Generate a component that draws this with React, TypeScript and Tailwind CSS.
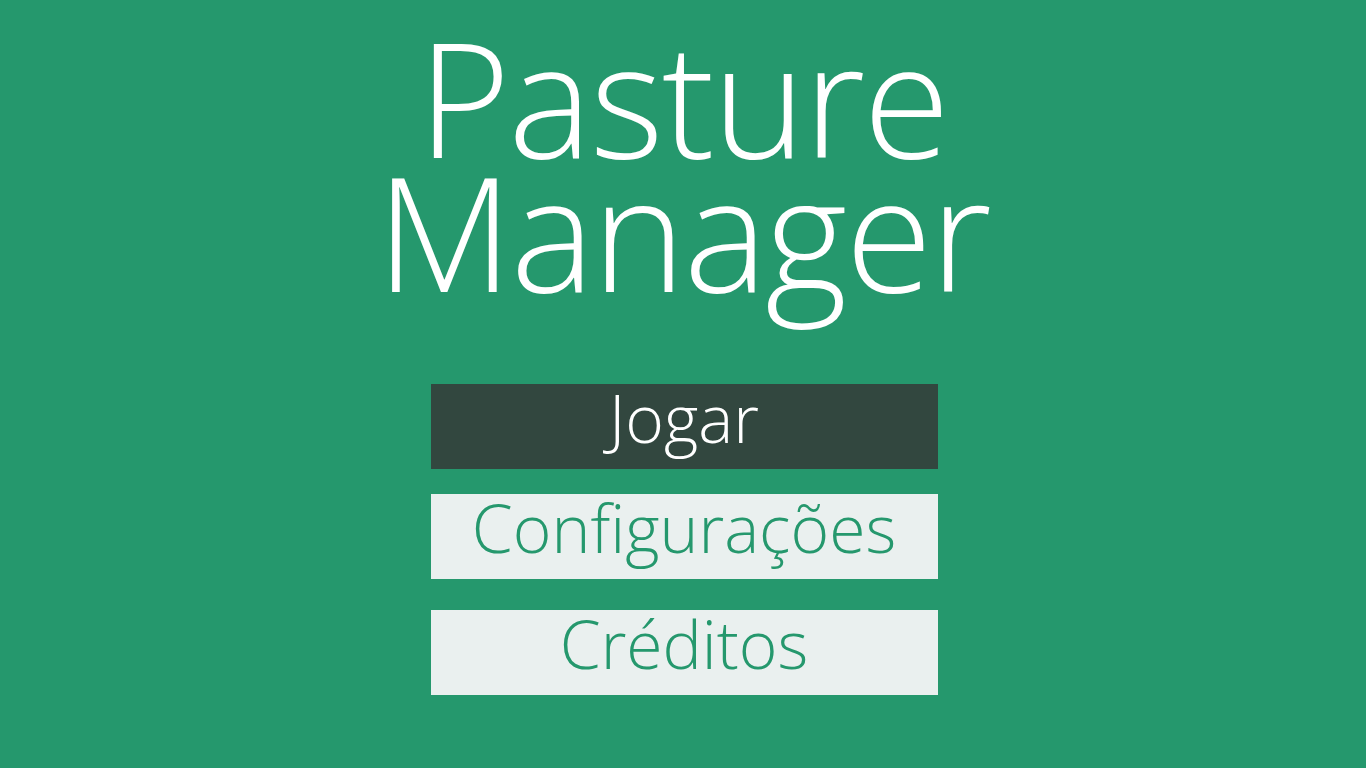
const buttons = [
  { id: 1, label: "Jogar", active: true },
  { id: 2, label: "Configurações", active: false },
  { id: 3, label: "Créditos", active: false },
];

export default function App() {
  return (
    <main
      className="w-[1366px] h-[768px] bg-[#25986d] flex flex-col items-center overflow-hidden"
      style={{ fontFamily: '"Open Sans", "Noto Sans", sans-serif' }}
    >
      <h1 className="mt-[30px] flex flex-col items-center text-[158px] leading-[134px] font-light text-white tracking-[-2px]">
        <span>Pasture</span>
        <span>Manager</span>
      </h1>
      <div className="mt-[86px] ml-[2px] flex flex-col">
        {buttons.map((b, i) => (
          <button
            key={b.id}
            className={
              (b.active ? "bg-[#32473f] text-white " : "bg-[#eaf0ef] text-[#25986d] ") +
              (i === 1 ? "mt-[25px] " : i === 2 ? "mt-[31px] " : "") +
              "w-[507px] h-[85px] pb-[20px] flex items-center justify-center text-[66px] font-light leading-none"
            }
          >
            {b.label}
          </button>
        ))}
      </div>
    </main>
  );
}
